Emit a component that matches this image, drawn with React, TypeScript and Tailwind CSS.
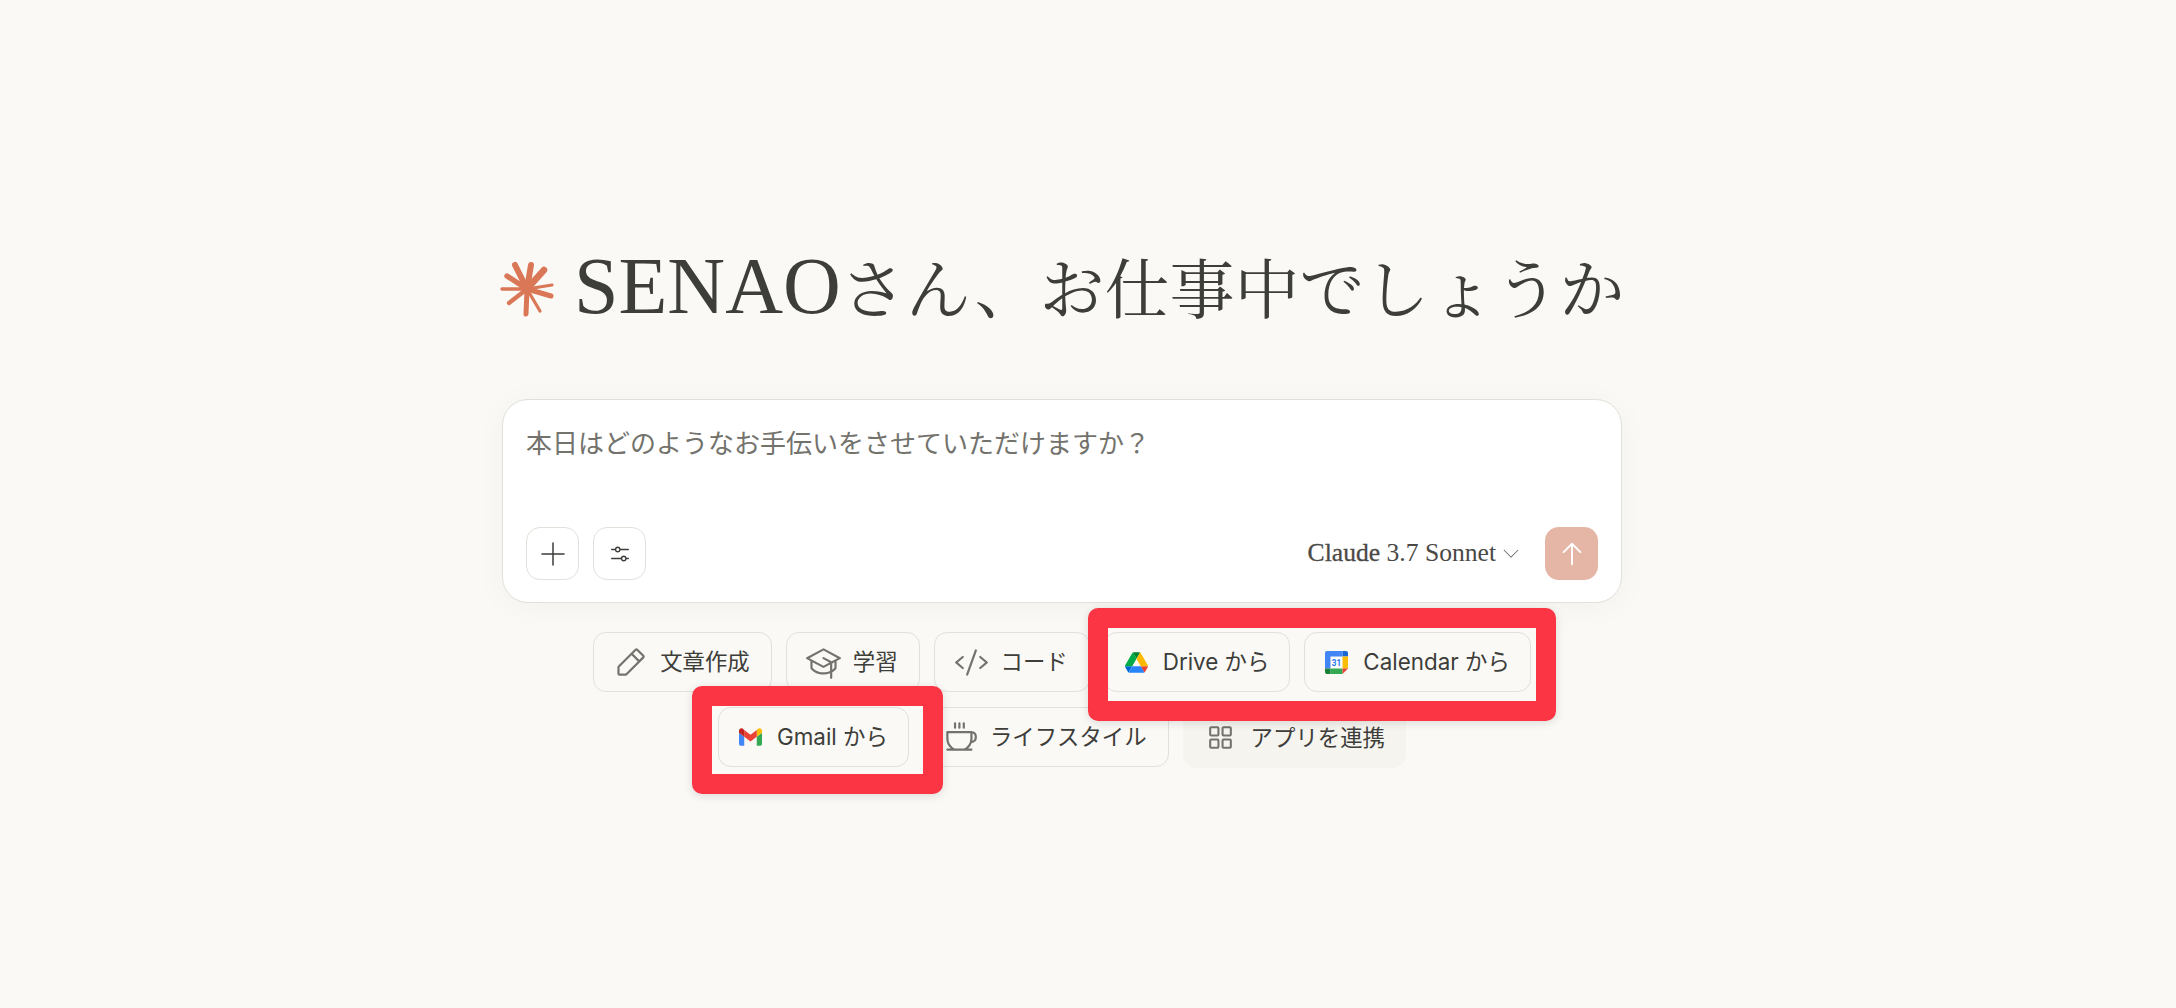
import {
  PiArrowUp,
  PiCaretDownLight,
  PiCode,
  PiCoffee,
  PiGraduationCap,
  PiPencilSimple,
  PiPlusLight,
  PiSlidersHorizontal,
  PiSquaresFour,
} from "react-icons/pi";

const rays = [
  { x: 21, y: 14, w: 6 },
  { x: 37, y: 14, w: 6 },
  { x: 50, y: 19, w: 6.5 },
  { x: 58, y: 34, w: 3.2 },
  { x: 57, y: 45, w: 5 },
  { x: 46, y: 60, w: 3.2 },
  { x: 32, y: 63, w: 5 },
  { x: 15, y: 52, w: 4.2 },
  { x: 8, y: 38, w: 3.4 },
  { x: 13, y: 25, w: 5.4 },
];

function Spark() {
  return (
    <svg viewBox="0 0 70 70" className="h-[70px] w-[70px] shrink-0">
      {rays.map((r) => (
        <line
          key={`${r.x}-${r.y}`}
          x1="33"
          y1="38"
          x2={r.x}
          y2={r.y}
          stroke="#d97757"
          strokeWidth={r.w}
          strokeLinecap="round"
        />
      ))}
    </svg>
  );
}

function DriveIcon() {
  return (
    <svg viewBox="0 0 87.3 78" className="w-[23px] h-[21px]">
      <path d="m6.6 66.85 3.85 6.65c.8 1.4 1.95 2.5 3.3 3.3l13.75-23.8h-27.5c0 1.55.4 3.1 1.2 4.5z" fill="#0066da" />
      <path d="m43.65 25-13.75-23.8c-1.35.8-2.5 1.9-3.3 3.3l-25.4 44a9.06 9.06 0 0 0 -1.2 4.5h27.5z" fill="#00ac47" />
      <path d="m73.55 76.8c1.35-.8 2.5-1.9 3.3-3.3l1.6-2.75 7.65-13.25c.8-1.4 1.2-2.95 1.2-4.5h-27.502l5.852 11.5z" fill="#ea4335" />
      <path d="m43.65 25 13.75-23.8c-1.35-.8-2.9-1.2-4.5-1.2h-18.5c-1.6 0-3.15.45-4.5 1.2z" fill="#00832d" />
      <path d="m59.8 53h-32.3l-13.75 23.8c1.35.8 2.9 1.2 4.5 1.2h50.8c1.6 0 3.15-.45 4.5-1.2z" fill="#2684fc" />
      <path d="m73.4 26.5-12.7-22c-.8-1.4-1.95-2.5-3.3-3.3l-13.75 23.8 16.15 28h27.45c0-1.55-.4-3.1-1.2-4.5z" fill="#ffba00" />
    </svg>
  );
}

function CalendarIcon() {
  return (
    <svg viewBox="0 0 24 24" className="w-[23px] h-[23px]">
      <rect x="5.7" y="5.7" width="12.6" height="12.6" fill="#fff" />
      <path d="M2 0h16.3v5.7H5.7v12.6H0V2a2 2 0 0 1 2-2z" fill="#4285f4" />
      <path d="M18.3 0H22a2 2 0 0 1 2 2v3.7h-5.7z" fill="#1967d2" />
      <rect x="18.3" y="5.7" width="5.7" height="12.6" fill="#fbbc04" />
      <rect x="5.7" y="18.3" width="12.6" height="5.7" fill="#34a853" />
      <path d="M0 18.3h5.7V24H2a2 2 0 0 1-2-2z" fill="#188038" />
      <path d="M18.3 18.3H24L18.3 24z" fill="#ea4335" />
      <text x="12" y="15.6" textAnchor="middle" fontSize="8.5" fontWeight="700" fill="#1a73e8" fontFamily="Roboto, sans-serif">
        31
      </text>
    </svg>
  );
}

function GmailIcon() {
  return (
    <svg viewBox="52 42 88 66" className="w-[23px] h-[18px]">
      <path fill="#4285f4" d="M58 108h14V74L52 59v43c0 3.32 2.69 6 6 6" />
      <path fill="#34a853" d="M120 108h14c3.32 0 6-2.69 6-6V59l-20 15" />
      <path fill="#fbbc04" d="M120 48v26l20-15v-8c0-7.42-8.47-11.65-14.4-7.2" />
      <path fill="#ea4335" d="M72 74V48l24 18 24-18v26L96 92" />
      <path fill="#c5221f" d="M52 51v8l20 15V48l-5.6-4.2c-5.94-4.45-14.4-.22-14.4 7.2" />
    </svg>
  );
}

const lineIcon = "w-[35px] h-[35px] -mx-[2px] text-[#73726c]";

const chips = [
  { label: "文章作成", style: "px-[21px] gap-[14px]", icon: <PiPencilSimple className={lineIcon} /> },
  { label: "学習", style: "px-[21px] gap-[14px]", icon: <PiGraduationCap className={lineIcon} /> },
  { label: "コード", style: "px-[21px] gap-[14px]", icon: <PiCode className={lineIcon} /> },
  { label: "Drive から", style: "px-[20px] gap-[15px]", icon: <DriveIcon /> },
  { label: "Calendar から", style: "px-[20px] gap-[15px]", icon: <CalendarIcon /> },
  { label: "Gmail から", style: "px-[20px] gap-[15px]", icon: <GmailIcon /> },
  { label: "ライフスタイル", style: "px-[21px] gap-[14px]", icon: <PiCoffee className={lineIcon} /> },
];

export default function App() {
  return (
    <div className="relative h-[1008px] overflow-hidden bg-[#faf9f5] flex flex-col items-center pr-[52px] pt-[230px] font-['Inter','Noto_Sans_CJK_JP',sans-serif]">
      <h1 className="w-[1120px] h-[112px] flex items-center gap-[10px] text-[#3d3d3a] font-normal whitespace-nowrap font-['Liberation_Serif','Noto_Serif_CJK_JP','Noto_Sans_CJK_JP',serif] -translate-x-[8px]">
        <Spark />
        <span className="leading-none">
          <span className="text-[80px]">SENAO</span>
          <span className="text-[65px]">さん、お仕事中でしょうか</span>
        </span>
      </h1>

      <div className="mt-[57px] w-[1120px] h-[204px] bg-white border border-[#e2e0da] rounded-[26px] shadow-[0_4px_32px_rgba(0,0,0,0.035)] flex flex-col justify-between px-[23px] pt-[22px] pb-[22px]">
        <p className="text-[26px] leading-[40px] text-[#73726c] font-['Noto_Sans_CJK_JP',sans-serif]">
          本日はどのようなお手伝いをさせていただけますか？
        </p>
        <div className="flex items-center gap-[14px]">
          <button className="w-[53px] h-[53px] flex items-center justify-center rounded-[14px] border border-[#e2e0da] text-[#3d3d3a]">
            <PiPlusLight className="w-8 h-8" />
          </button>
          <button className="w-[53px] h-[53px] flex items-center justify-center rounded-[14px] border border-[#e2e0da] text-[#3d3d3a]">
            <PiSlidersHorizontal className="w-6 h-6" />
          </button>
          <div className="ml-auto flex items-center gap-[4px] font-['Liberation_Serif',serif] text-[25.6px] text-[#4a4945]">
            <span>
              <span className="[-webkit-text-stroke:0.3px_#4a4945]">Claude</span> 3.7 Sonnet
            </span>
            <PiCaretDownLight className="w-[22px] h-[22px] text-[#73726c]" />
          </div>
          <button className="ml-[9px] w-[53px] h-[53px] flex items-center justify-center rounded-[14px] bg-[#e5b6a6] text-white">
            <PiArrowUp className="w-[30px] h-[30px]" />
          </button>
        </div>
      </div>

      <div className="mt-[29px] w-[1120px] flex flex-wrap justify-center gap-x-[14px] gap-y-[15px]">
        {chips.map((c) => (
          <button
            key={c.label}
            className={`h-[60px] flex items-center rounded-[13px] border border-[#e2e0da] text-[22.4px] text-[#3d3d3a] whitespace-nowrap ${c.style}`}
          >
            {c.icon}
            {c.label}
          </button>
        ))}
        <button className="h-[61px] px-[21px] flex items-center gap-[14px] rounded-[13px] bg-[#f5f4ee] text-[22.4px] text-[#3d3d3a] whitespace-nowrap">
          <PiSquaresFour className="w-[33px] h-[33px] text-[#73726c]" />
          アプリを連携
        </button>
      </div>

      <div className="absolute left-[1088px] top-[608px] w-[468px] h-[113px] border-[20px] border-[#fc3545] rounded-[10px] shadow-[0_2px_10px_rgba(0,0,0,0.12)]" />
      <div className="absolute left-[692px] top-[686px] w-[251px] h-[108px] border-[20px] border-[#fc3545] rounded-[10px] shadow-[0_2px_10px_rgba(0,0,0,0.12)]" />
    </div>
  );
}
